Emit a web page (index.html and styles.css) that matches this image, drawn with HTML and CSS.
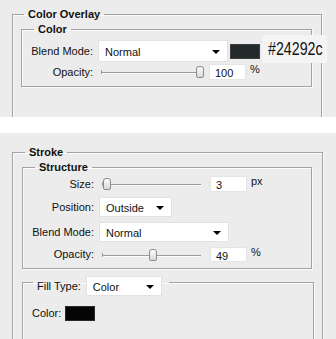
FILE: index.html
```html
<!DOCTYPE html>
<html lang="en">
<head>
  <meta charset="UTF-8" />
  <meta name="viewport" content="width=device-width, initial-scale=1" />
  <title>Layer Style</title>
  <link rel="stylesheet" href="styles.css">
</head>
<body>

  <div class="panel overlay-panel">
    <fieldset class="group outer">
      <legend>Color Overlay</legend>
      <fieldset class="group inner">
        <legend>Color</legend>
        <div class="row row-tall">
          <span class="label">Blend Mode:</span>
          <div class="select select-wide"><span>Normal</span><i class="arrow"></i></div>
          <span class="swatch swatch-grey"></span>
        </div>
        <div class="row row-field">
          <span class="label">Opacity:</span>
          <div class="slider"><span class="thumb" style="left: 95px"></span></div>
          <div class="field">100</div>
          <span class="unit">%</span>
        </div>
      </fieldset>
    </fieldset>
    <div class="hex"><span>#24292c</span></div>
  </div>

  <div class="panel stroke-panel">
    <fieldset class="group outer">
      <legend>Stroke</legend>
      <fieldset class="group inner structure">
        <legend>Structure</legend>
        <div class="row row-field">
          <span class="label">Size:</span>
          <div class="slider"><span class="thumb" style="left: 1px"></span></div>
          <div class="field">3</div>
          <span class="unit">px</span>
        </div>
        <div class="row row-select">
          <span class="label">Position:</span>
          <div class="select select-short"><span>Outside</span><i class="arrow"></i></div>
        </div>
        <div class="row row-select">
          <span class="label">Blend Mode:</span>
          <div class="select select-wide"><span>Normal</span><i class="arrow"></i></div>
        </div>
        <div class="row row-small">
          <span class="label">Opacity:</span>
          <div class="slider"><span class="thumb" style="left: 47px"></span></div>
          <div class="field">49</div>
          <span class="unit">%</span>
        </div>
      </fieldset>

      <fieldset class="group fill">
        <legend>
          <span class="fill-label">Fill Type:</span>
          <div class="select select-fill"><span>Color</span><i class="arrow"></i></div>
        </legend>
        <div class="color-row">
          <span>Color:</span>
          <span class="swatch swatch-black"></span>
        </div>
      </fieldset>
    </fieldset>
  </div>

</body>
</html>
```

FILE: styles.css
```css
body {
  margin: 0;
  background: #fff;
  font-family: "Liberation Sans", Arial, sans-serif;
  font-size: 11px;
  line-height: 13px;
  color: #111;
}
.panel {
  position: relative;
  background: #ececec;
  overflow: hidden;
}
.overlay-panel {
  height: 117px;
  margin-bottom: 16px;
}
.stroke-panel {
  height: 206px;
}
.group {
  margin: 0;
  padding: 0;
  border: 1px solid #a3a3a3;
  box-shadow: inset 1px 1px 0 #fbfbfb, 1px 1px 0 #fbfbfb;
  min-width: 0;
}
.group legend {
  padding: 0 4px;
  font-weight: bold;
  color: #111;
}
.outer {
  padding-bottom: 60px;
}
.overlay-panel .outer {
  margin: 8px 14px 0 12px;
}
.stroke-panel .outer {
  margin: 13px 13px 0 12px;
}
.outer > legend {
  margin-left: 11px;
}
.stroke-panel .outer > legend {
  margin-left: 12px;
}
.inner {
  margin: 2px 9px 0 8px;
  padding: 4px 0 6px;
}
.inner > legend {
  margin-left: 12px;
}
.structure {
  margin: 2px 10px 0 9px;
  padding: 2px 0 6px;
  display: flex;
  flex-direction: column;
  gap: 5px;
}
.row {
  display: flex;
  align-items: center;
}
.row-tall { height: 22px; margin-bottom: 2px; }
.row-field { height: 16px; }
.row-select { height: 20px; }
.row-small { height: 15px; }
.label {
  width: 71px;
  text-align: right;
  margin-right: 5px;
  flex: none;
}
.select {
  position: relative;
  box-sizing: border-box;
  height: 100%;
  background: #fff;
  border: 1px solid #e2e2e2;
  display: flex;
  align-items: center;
  padding-left: 6px;
  padding-top: 2px;
  flex: none;
}
.select-wide { width: 130px; }
.select-short { width: 73px; }
.arrow {
  position: absolute;
  right: 7px;
  top: 50%;
  margin-top: -1px;
  border-left: 4px solid transparent;
  border-right: 4px solid transparent;
  border-top: 4px solid #000;
}
.swatch {
  display: block;
  flex: none;
  width: 30px;
  height: 15px;
  box-sizing: border-box;
}
.swatch-grey {
  margin-left: 2px;
  background: #24292c;
  border: 1px solid #3a3e40;
}
.swatch-black {
  background: #050505;
  border: 1px solid #2a2a2a;
}
.slider {
  position: relative;
  width: 103px;
  height: 100%;
  margin-left: 3px;
  margin-right: 5px;
  flex: none;
}
.slider::before {
  content: "";
  position: absolute;
  left: 0;
  right: 4px;
  top: 50%;
  border-top: 1px solid #9a9a9a;
  border-bottom: 1px solid #fafafa;
}
.slider::after {
  content: "";
  position: absolute;
  left: 0;
  top: 50%;
  margin-top: -2px;
  height: 4px;
  border-left: 1px solid #9a9a9a;
}
.thumb {
  position: absolute;
  top: 50%;
  margin-top: -6px;
  width: 8px;
  height: 12px;
  box-sizing: border-box;
  background: linear-gradient(#fdfdfd, #d8d8d8);
  border: 1px solid #8c8c8c;
  border-radius: 3px 3px 2px 2px;
  z-index: 1;
}
.field {
  box-sizing: border-box;
  width: 37px;
  height: 100%;
  background: #fff;
  border: 1px solid #e4e4e4;
  padding: 2px 0 0 5px;
  flex: none;
}
.unit {
  margin-left: 4px;
  align-self: flex-start;
  line-height: 11px;
}
.hex {
  position: absolute;
  left: 262px;
  top: 35px;
  width: 65px;
  height: 28px;
  box-sizing: border-box;
  padding-left: 6px;
  background: #f4f4f4;
  font-size: 18px;
  line-height: 29px;
  color: #111;
  white-space: nowrap;
}
.hex span {
  display: inline-block;
  transform: scaleX(0.79);
  transform-origin: left center;
}
.fill {
  margin: 7px 8px 0 9px;
  padding: 0 0 40px;
}
.fill > legend {
  display: flex;
  align-items: flex-start;
  margin-left: 10px;
  padding: 0 7px 0 4px;
  font-weight: normal;
}
.fill-label {
  padding-top: 4px;
  margin-bottom: -5px;
  margin-right: 5px;
}
.select-fill {
  width: 76px;
  height: 20px;
  margin-bottom: -8px;
}
.color-row {
  display: flex;
  align-items: center;
  gap: 4px;
  margin-top: 18px;
  padding-left: 9px;
  height: 15px;
}
```
